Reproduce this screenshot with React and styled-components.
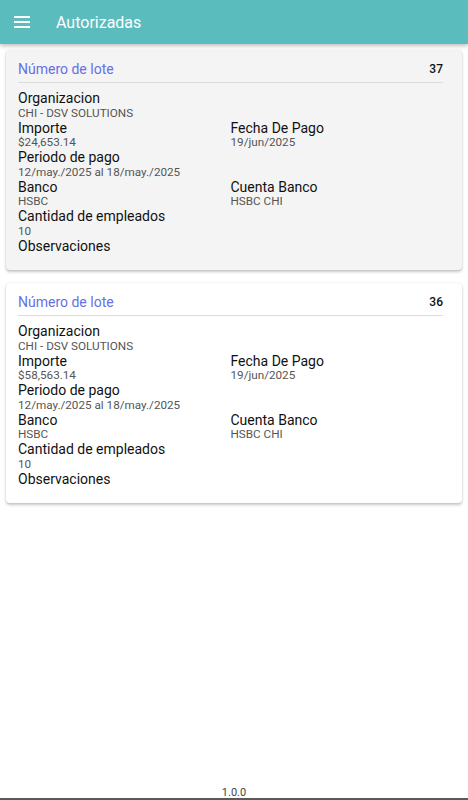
import React from "react";
import styled, { createGlobalStyle } from "styled-components";

const lotes = [
  {
    numero: 37,
    organizacion: "CHI - DSV SOLUTIONS",
    importe: "$24,653.14",
    fechaPago: "19/jun/2025",
    periodo: "12/may./2025 al 18/may./2025",
    banco: "HSBC",
    cuenta: "HSBC CHI",
    empleados: "10",
    grey: true,
  },
  {
    numero: 36,
    organizacion: "CHI - DSV SOLUTIONS",
    importe: "$58,563.14",
    fechaPago: "19/jun/2025",
    periodo: "12/may./2025 al 18/may./2025",
    banco: "HSBC",
    cuenta: "HSBC CHI",
    empleados: "10",
    grey: false,
  },
];

const GlobalStyle = createGlobalStyle`
  html, body {
    margin: 0;
    padding: 0;
    height: 100%;
    background: #fff;
    font-family: Roboto, "Liberation Sans", sans-serif;
  }
  #root {
    height: 100%;
  }
`;

const Page = styled.div`
  height: 800px;
  display: flex;
  flex-direction: column;
  box-sizing: border-box;
  border-bottom: 2px solid #5a5a5a;
`;

const Toolbar = styled.header`
  height: 44px;
  background: #5bbcbd;
  display: flex;
  align-items: center;
  padding: 0 14px;
  gap: 26px;
  box-shadow: 0 2px 4px rgba(0, 0, 0, 0.25);
  color: #fff;
  flex-shrink: 0;
`;

const Title = styled.h1`
  margin: 0;
  font-size: 16px;
  font-weight: 400;
`;

const Content = styled.main`
  flex: 1;
  padding: 6px 6px;
  display: flex;
  flex-direction: column;
  gap: 13px;
`;

const Card = styled.section`
  background: ${({ $grey }) => ($grey ? "#f4f4f4" : "#fff")};
  border-radius: 4px;
  box-shadow: 0 2px 3px rgba(0, 0, 0, 0.22), 0 0 2px rgba(0, 0, 0, 0.1);
  padding: 11px 19px 16px 12px;
`;

const CardHead = styled.div`
  display: flex;
  justify-content: space-between;
  align-items: center;
  padding-bottom: 5px;
  border-bottom: 1px solid #dcdcdc;
  margin-bottom: 7px;
`;

const HeadTitle = styled.span`
  color: #6570e6;
  font-size: 14px;
`;

const HeadNum = styled.span`
  font-size: 12px;
  font-weight: 500;
  color: #111;
`;

const Grid = styled.div`
  display: grid;
  grid-template-columns: 1fr 1fr;
`;

const Field = styled.div`
  grid-column: ${({ $full }) => ($full ? "1 / -1" : "auto")};
  display: flex;
  flex-direction: column;
`;

const Label = styled.span`
  font-size: 14px;
  line-height: 16.5px;
  color: #111;
`;

const Value = styled.span`
  font-size: 11.7px;
  line-height: 13px;
  color: #555;
`;

const Footer = styled.footer`
  text-align: center;
  font-size: 11px;
  line-height: 11px;
  color: #444;
`;

const Menu = () => (
  <svg width="16" height="12" viewBox="0 0 16 12">
    <rect x="0" y="0" width="16" height="2" fill="#fff" />
    <rect x="0" y="5" width="16" height="2" fill="#fff" />
    <rect x="0" y="10" width="16" height="2" fill="#fff" />
  </svg>
);

const LoteCard = ({ lote }) => (
  <Card $grey={lote.grey}>
    <CardHead>
      <HeadTitle>Número de lote</HeadTitle>
      <HeadNum>{lote.numero}</HeadNum>
    </CardHead>
    <Grid>
      <Field $full>
        <Label>Organizacion</Label>
        <Value>{lote.organizacion}</Value>
      </Field>
      <Field>
        <Label>Importe</Label>
        <Value>{lote.importe}</Value>
      </Field>
      <Field>
        <Label>Fecha De Pago</Label>
        <Value>{lote.fechaPago}</Value>
      </Field>
      <Field $full>
        <Label>Periodo de pago</Label>
        <Value>{lote.periodo}</Value>
      </Field>
      <Field>
        <Label>Banco</Label>
        <Value>{lote.banco}</Value>
      </Field>
      <Field>
        <Label>Cuenta Banco</Label>
        <Value>{lote.cuenta}</Value>
      </Field>
      <Field $full>
        <Label>Cantidad de empleados</Label>
        <Value>{lote.empleados}</Value>
      </Field>
      <Field $full>
        <Label>Observaciones</Label>
      </Field>
    </Grid>
  </Card>
);

export default function App() {
  return (
    <>
      <GlobalStyle />
      <Page>
        <Toolbar>
          <Menu />
          <Title>Autorizadas</Title>
        </Toolbar>
        <Content>
          {lotes.map((l) => (
            <LoteCard key={l.numero} lote={l} />
          ))}
        </Content>
        <Footer>1.0.0</Footer>
      </Page>
    </>
  );
}
